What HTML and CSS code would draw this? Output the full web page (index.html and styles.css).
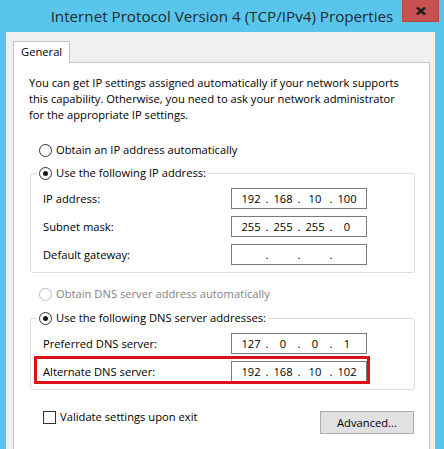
FILE: index.html
```html
<!DOCTYPE html>
<html lang="en">
<head>
<meta charset="utf-8">
<title>Internet Protocol Version 4 (TCP/IPv4) Properties</title>
<link rel="stylesheet" href="styles.css">
</head>
<body>
<div class="window">
  <div class="titlebar">
    <span class="title">Internet Protocol Version 4 (TCP/IPv4) Properties</span>
    <span class="close"><svg width="10" height="8" viewBox="0 0 10 8"><path d="M1 0.5 L9 7.5 M9 0.5 L1 7.5" stroke="#1c1c1c" stroke-width="2.4" fill="none"/></svg></span>
  </div>
  <div class="body">
    <div class="tabs"><div class="tab">General</div></div>
    <div class="panel">
      <p class="desc">You can get IP settings assigned automatically if your network supports<br>this capability. Otherwise, you need to ask your network administrator<br>for the appropriate IP settings.</p>

      <div class="opt"><span class="radio"></span>Obtain an IP address automatically</div>
      <fieldset class="group">
        <legend><span class="radio on"></span>Use the following IP address:</legend>
        <div class="row"><span class="lbl">IP address:</span>
          <div class="ip"><span class="oct">192</span><span class="dot">.</span><span class="oct">168</span><span class="dot">.</span><span class="oct">10</span><span class="dot">.</span><span class="oct">100</span></div></div>
        <div class="row"><span class="lbl">Subnet mask:</span>
          <div class="ip"><span class="oct">255</span><span class="dot">.</span><span class="oct">255</span><span class="dot">.</span><span class="oct">255</span><span class="dot">.</span><span class="oct">0</span></div></div>
        <div class="row"><span class="lbl">Default gateway:</span>
          <div class="ip"><span class="oct"></span><span class="dot">.</span><span class="oct"></span><span class="dot">.</span><span class="oct"></span><span class="dot">.</span><span class="oct"></span></div></div>
      </fieldset>

      <div class="opt dis"><span class="radio"></span>Obtain DNS server address automatically</div>
      <fieldset class="group dns">
        <legend><span class="radio on"></span>Use the following DNS server addresses:</legend>
        <div class="row"><span class="lbl">Preferred DNS server:</span>
          <div class="ip"><span class="oct">127</span><span class="dot">.</span><span class="oct">0</span><span class="dot">.</span><span class="oct">0</span><span class="dot">.</span><span class="oct">1</span></div></div>
        <div class="row mark"><span class="lbl">Alternate DNS server:</span>
          <div class="ip"><span class="oct">192</span><span class="dot">.</span><span class="oct">168</span><span class="dot">.</span><span class="oct">10</span><span class="dot">.</span><span class="oct">102</span></div></div>
      </fieldset>

      <div class="footer">
        <div class="check"><span class="box"></span>Validate settings upon exit</div>
        <div class="btn">Advanced...</div>
      </div>
    </div>
  </div>
</div>
</body>
</html>
```
FILE: styles.css
```css
html, body {
  margin: 0;
  height: 449px;
  overflow: hidden;
}
body {
  background: #5ac5ec;
  font-family: "Open Sans", "Noto Sans", sans-serif;
  font-size: 11.2px;
  color: #000;
}
.window {
  display: flex;
  flex-direction: column;
  height: 449px;
}
.titlebar {
  height: 32px;
  flex: none;
  display: flex;
  align-items: center;
  justify-content: center;
  position: relative;
}
.title {
  font-size: 15.2px;
  line-height: 32px;
  color: #1f2a30;
}
.close {
  position: absolute;
  top: 0;
  right: 5px;
  width: 37px;
  height: 22px;
  box-sizing: border-box;
  background: #c75050;
  border: 1px solid #b44646;
  border-top: none;
  display: flex;
  align-items: center;
  justify-content: center;
}
.body {
  flex: 1;
  margin: 0 9px 0 6px;
  background: #f0f0f0;
  padding: 9px 5px 0 7px;
  display: flex;
  flex-direction: column;
}
.tabs {
  display: flex;
}
.tab {
  width: 57px;
  height: 22px;
  box-sizing: border-box;
  border: 1px solid #c6c6c6;
  border-bottom: none;
  background: #fff;
  padding-left: 7px;
  line-height: 20px;
  margin-bottom: -1px;
  position: relative;
  z-index: 1;
}
.panel {
  flex: 1;
  background: #fff;
  border: 1px solid #c6c6c6;
  border-bottom: none;
  padding: 12px 14px 0 16px;
}
.desc {
  margin: 0 0 0 -1px;
  line-height: 16px;
}
.opt {
  display: flex;
  align-items: center;
  height: 16px;
  line-height: 16px;
  margin: 19px 0 0 9px;
}
.opt.dis {
  margin-top: 13px;
  color: #838383;
}
.opt.dis .radio {
  border-color: #bcbcbc;
}
.radio {
  width: 13px;
  height: 13px;
  box-sizing: border-box;
  border: 1px solid #333;
  border-radius: 50%;
  background: #fff;
  margin-right: 4px;
  display: flex;
  align-items: center;
  justify-content: center;
  flex: none;
}
.radio.on::after {
  content: "";
  width: 5px;
  height: 5px;
  border-radius: 50%;
  background: #1a1a1a;
}
.group {
  margin: 7px 0 0;
  padding: 7px 12px 7px 12px;
  border: 1px solid #dcdcdc;
  border-radius: 3px;
  min-width: 0;
}
.group.dns {
  margin-top: 8px;
}
legend {
  display: flex;
  align-items: center;
  height: 16px;
  margin-left: -6px;
  padding: 0 2px;
  line-height: 16px;
}
.row {
  display: flex;
  align-items: center;
  width: 324px;
  height: 21px;
}
.row + .row {
  margin-top: 7px;
}
.lbl {
  width: 188px;
  flex: none;
}
.ip {
  width: 136px;
  height: 21px;
  box-sizing: border-box;
  border: 1px solid #7a7a7a;
  background: #fff;
  display: flex;
  align-items: center;
  padding-left: 8px;
}
.oct {
  width: 22px;
  text-align: center;
}
.dot {
  width: 10px;
  text-align: center;
}
.row.mark {
  position: relative;
}
.row.mark::after {
  content: "";
  position: absolute;
  left: -9px;
  right: -3px;
  top: -5px;
  bottom: -2px;
  border: 3px solid #dd0f18;
}
.footer {
  display: flex;
  justify-content: space-between;
  align-items: flex-start;
  margin: 19px 1px 0 13px;
}
.check {
  display: flex;
  align-items: center;
  height: 16px;
  line-height: 16px;
}
.box {
  width: 13px;
  height: 13px;
  box-sizing: border-box;
  border: 1px solid #333;
  background: #fff;
  margin-right: 4px;
}
.btn {
  width: 94px;
  height: 23px;
  margin-top: 2px;
  box-sizing: border-box;
  background: #e1e1e1;
  border: 1px solid #adadad;
  display: flex;
  align-items: center;
  justify-content: center;
}
```
